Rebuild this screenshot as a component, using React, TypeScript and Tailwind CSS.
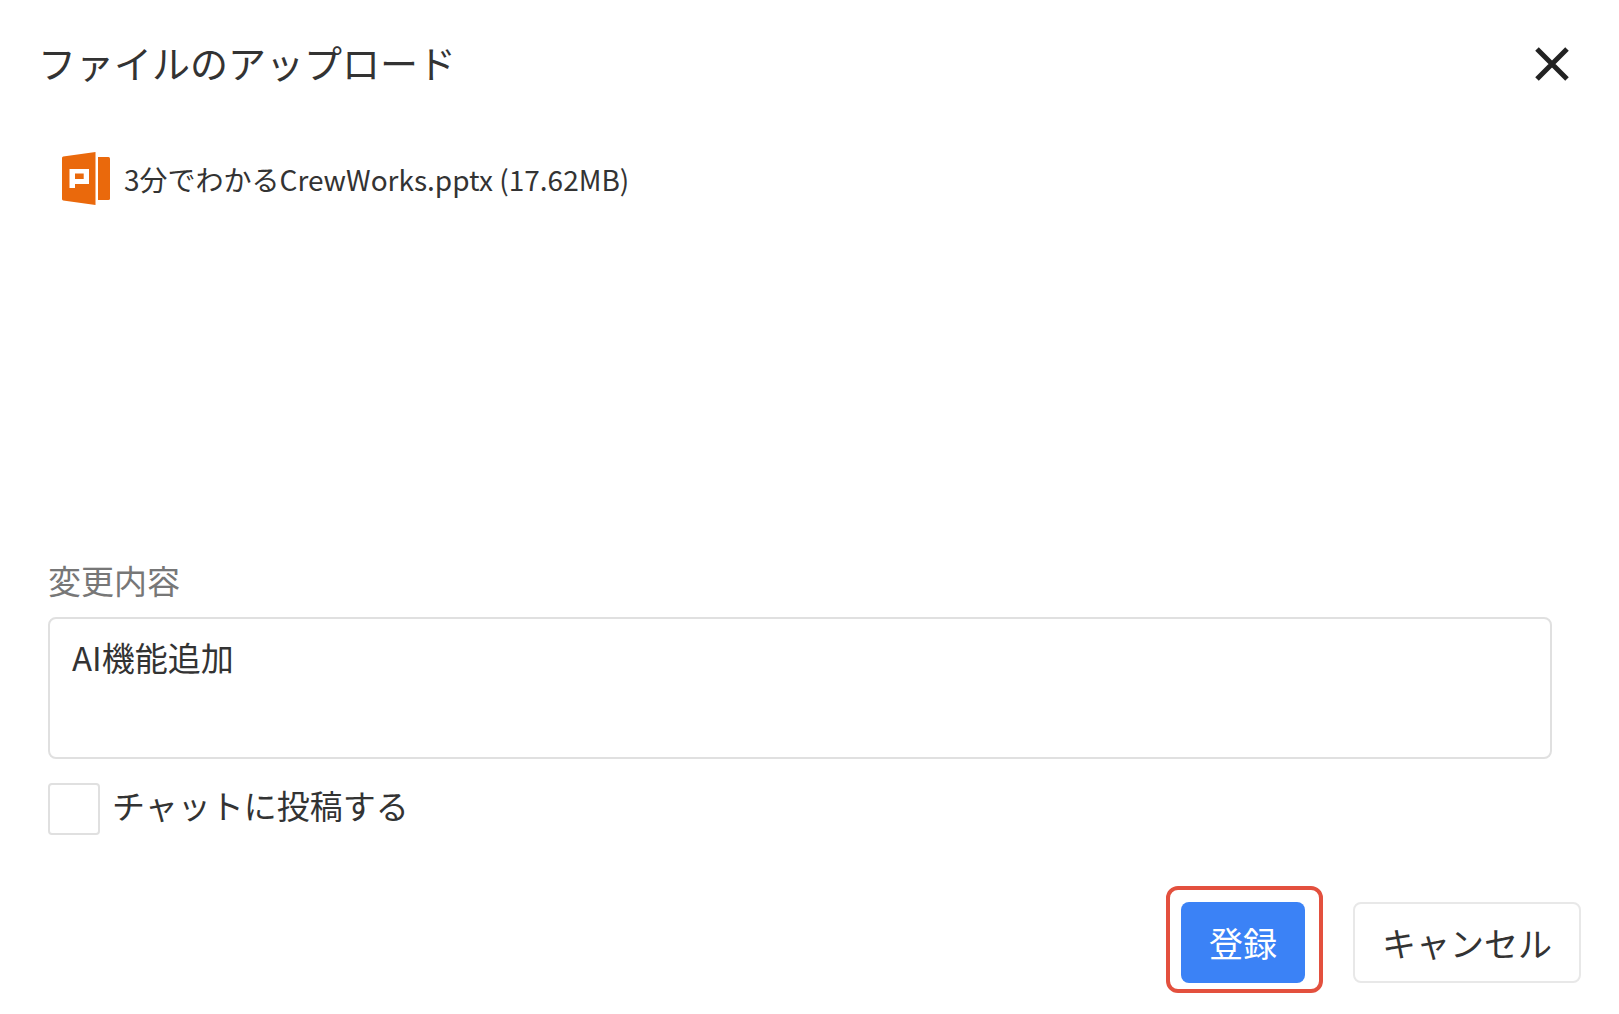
import { useState } from 'react';

function PowerPointIcon() {
  return (
    <svg className="w-12 h-[53px] shrink-0" viewBox="0 0 48 53" aria-hidden="true">
      <path d="M0 6 Q0 4.8 1.2 4.6 L33.5 0 V53 L1.2 48.4 Q0 48.2 0 47 Z" fill="#ea690c" />
      <path d="M36 5 H46.5 Q48 5 48 6.5 V46.5 Q48 48 46.5 48 H36 Z" fill="#ea690c" />
      <path fillRule="evenodd" d="M7.5 17 H27 V32 H13 V36 H7.5 Z M13 21.5 V27 H21.7 V21.5 Z" fill="#fff" />
    </svg>
  );
}

export default function App() {
  const [comment, setComment] = useState('AI機能追加');
  const [postToChat, setPostToChat] = useState(false);

  return (
    <div
      role="dialog"
      aria-labelledby="upload-title"
      className="min-h-screen bg-white pt-[30px] pb-5 font-['Noto_Sans_CJK_JP',sans-serif] text-[33px] leading-11 text-[#333]"
    >
      <header className="flex items-center justify-between pl-[38px] pr-[47px]">
        <h1 id="upload-title" className="text-[38px] leading-16">ファイルのアップロード</h1>
        <button type="button" aria-label="閉じる">
          <svg className="w-10 h-11" viewBox="0 0 40 44" aria-hidden="true">
            <path d="M5 9 L35 39 M35 9 L5 39" stroke="#222" strokeWidth="5" fill="none" />
          </svg>
        </button>
      </header>

      <ul className="mt-[58px] h-[406px] pl-[62px]">
        <li className="flex items-center gap-[14px] text-[28px]">
          <PowerPointIcon />
          <span>3分でわかるCrewWorks.pptx (17.62MB)</span>
        </li>
      </ul>

      <div className="pl-12 pr-[67px]">
        <label htmlFor="comment" className="block text-[#777]">変更内容</label>
        <textarea
          id="comment"
          value={comment}
          onChange={(e) => setComment(e.target.value)}
          className="mt-[15px] block h-[142px] w-full resize-none rounded-lg border-2 border-[#e0e0e0] px-[22px] py-4 outline-none"
        />
        <div className="mt-6 flex items-start gap-3">
          <input
            id="post-to-chat"
            type="checkbox"
            checked={postToChat}
            onChange={(e) => setPostToChat(e.target.checked)}
            className="h-[52px] w-[52px] appearance-none rounded border-2 border-[#e0e0e0] bg-white checked:bg-[#3b82f6]"
          />
          <label htmlFor="post-to-chat">チャットに投稿する</label>
        </div>
      </div>

      <footer className="mt-[51px] flex items-start justify-end gap-[30px] pr-[38px] text-[34px]">
        <div className="rounded-xl border-4 border-[#e3503e] pt-3 pr-[14px] pb-[6px] pl-[11px]">
          <button type="button" className="block h-[81px] w-[124px] rounded-lg bg-[#3b82f6] text-white">登録</button>
        </div>
        <button type="button" className="mt-4 h-[81px] w-[228px] rounded-lg border-2 border-[#e8e8e8] bg-white">キャンセル</button>
      </footer>
    </div>
  );
}
